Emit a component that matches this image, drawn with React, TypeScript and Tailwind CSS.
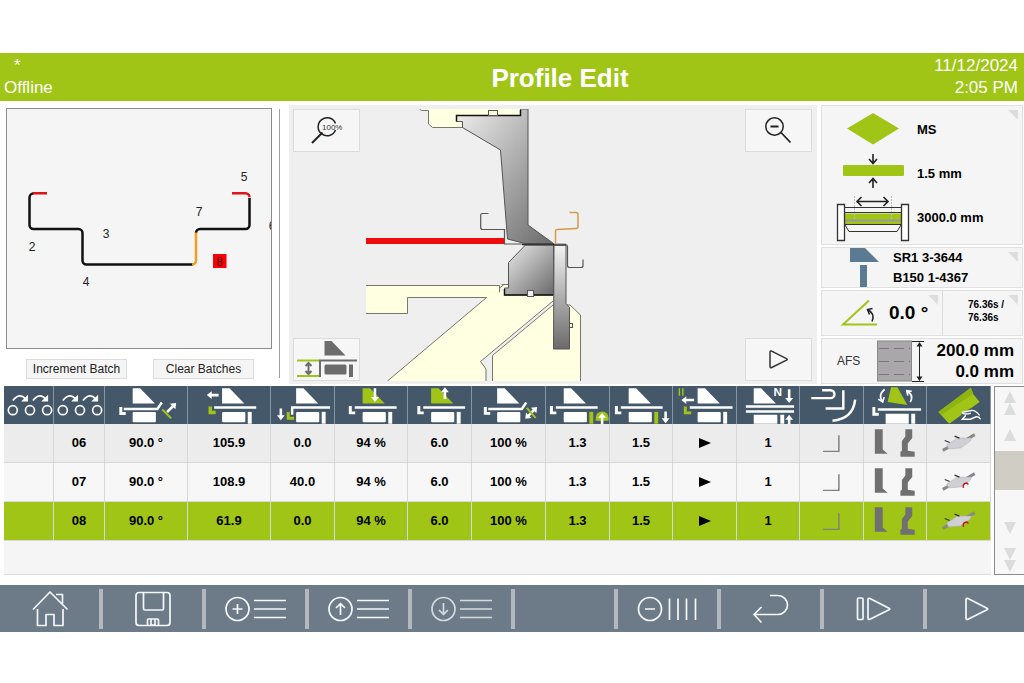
import type { ReactNode } from "react";

const GREEN = "#a0c517";
const WHITE = "#ffffff";

export default function App() {
  return (
    <div className="min-h-screen bg-white pt-[53px] font-['Liberation_Sans',Arial,sans-serif] text-black">
      <Header />
      <main>
        <section className="flex h-[285px]">
          <ProfilePanel />
          <MachineView />
          <InfoPanel />
        </section>
        <StepTable />
      </main>
      <Toolbar />
    </div>
  );
}

function Header() {
  return (
    <header className="grid h-12 grid-cols-[1fr_auto_1fr] bg-[#a0c517] px-1 pt-[2px] text-[17px] leading-[22px] text-white">
      <div>
        <div className="pl-[10px]">*</div>
        <div>Offline</div>
      </div>
      <h1 className="self-center pl-24 text-[26px] font-bold whitespace-nowrap">Profile Edit</h1>
      <div className="pr-[2px] text-right">
        <div>11/12/2024</div>
        <div>2:05 PM</div>
      </div>
    </header>
  );
}

const BEND_LABELS = [
  { n: "2", x: 32, y: 251 },
  { n: "3", x: 106, y: 238 },
  { n: "4", x: 86, y: 286 },
  { n: "5", x: 244, y: 181 },
  { n: "6", x: 272, y: 230 },
  { n: "7", x: 199, y: 216 },
];

function ProfilePanel() {
  return (
    <div className="flex w-[289px] shrink-0 gap-[7px] pl-[6px] pt-[7px]">
      <div className="w-[266px]">
        <div className="border border-[#8c8c8c] bg-[#f5f5f5]">
          <svg viewBox="7 109 264 239" className="block h-[239px] w-[264px]">
            <g fill="none" strokeWidth="2.5">
              <path
                stroke="#111"
                d="M34 193.3a4.5 4.5 0 0 0-4.5 4.5V225a4 4 0 0 0 4 4h45a4 4 0 0 1 4 4v27.5a4 4 0 0 0 4 4H193M196 233a4 4 0 0 1 4-4h45.5a4 4 0 0 0 4-4v-27"
              />
              <path stroke="#e0121a" d="M33 193.3h14M232 193.3h13.5a4 4 0 0 1 4 4" />
              <path stroke="#f0a020" d="M196 232.5v28a4 4 0 0 1-4 4" />
            </g>
            <rect x="213" y="254" width="13.5" height="14" fill="#fb0007" />
            <g fontSize="12" textAnchor="middle" fill="#222">
              {BEND_LABELS.map((l) => (
                <text key={l.n} x={l.x} y={l.y}>
                  {l.n}
                </text>
              ))}
              <text x="219.5" y="265.5" fill="#4a0505">
                8
              </text>
            </g>
          </svg>
        </div>
        <div className="mt-[10px] flex gap-[26px] pl-5 text-[12px] text-[#222]">
          <button className="h-5 w-[101px] border border-[#dcdcdc] bg-[#f5f5f5] whitespace-nowrap">Increment Batch</button>
          <button className="h-5 w-[101px] border border-[#dcdcdc] bg-[#f5f5f5] whitespace-nowrap">Clear Batches</button>
        </div>
      </div>
      <div className="mt-px h-[269px] w-px bg-[#a0a0a0]" />
    </div>
  );
}

function ViewButton({ label, children }: { label: string; children: ReactNode }) {
  return (
    <button
      aria-label={label}
      className="flex h-[43px] w-[67px] items-center justify-center border border-[#dcdcdc] bg-[#f6f6f6]"
    >
      <svg viewBox="0 0 65 41" className="h-[41px] w-[65px]">
        {children}
      </svg>
    </button>
  );
}

function MachineView() {
  return (
    <div className="mt-1 flex h-[279px] min-w-0 flex-1 bg-[#efefef] pb-[3px] pl-1 pr-[5px] pt-1">
      <div className="flex shrink-0 flex-col justify-between">
        <ViewButton label="Zoom 100%">
          <g fill="none" stroke="#222" strokeWidth="1.5">
            <path d="M41.5 13.5A9 9 0 1 0 41.5 20" />
            <path strokeWidth="2" d="M28.5 22.5 18 33" />
          </g>
          <text x="28" y="19.5" fontSize="8" fill="#333">
            100%
          </text>
        </ViewButton>
        <ViewButton label="Tool height">
          <path fill="#6c6c6c" d="M30.5 2h7l14 14.500h-21z" />
          <g fill="none" stroke="#6c6c6c" strokeWidth="2">
            <path d="M63 21.5H26V38" />
            <path strokeWidth="2" d="M14.5 24v11M11.5 27l3-3 3 3M11.5 32l3 3 3-3" />
          </g>
          <rect x="30.5" y="25.5" width="22" height="10" rx="1.5" fill="#6c6c6c" />
          <rect x="55" y="25.5" width="4" height="12.5" fill="#6c6c6c" />
          <path stroke={GREEN} strokeWidth="2" d="M3 21.5h22M3 37h22" />
        </ViewButton>
      </div>

      <svg viewBox="360 109 385 272" preserveAspectRatio="xMinYMin slice" className="h-[272px] min-w-0 flex-1">
        <defs>
          <linearGradient id="steel" x1="0" y1="0" x2="1" y2="1">
            <stop offset="0" stopColor="#efefef" />
            <stop offset="1" stopColor="#6a6a6a" />
          </linearGradient>
          <linearGradient id="bar" x1="0" y1="0" x2="0" y2="1">
            <stop offset="0" stopColor="#f2f2f2" />
            <stop offset="1" stopColor="#6a6a6a" />
          </linearGradient>
        </defs>
        <g stroke="#77776c" strokeWidth="1" fill="#ffffe1">
          {/* upper beam */}
          <path stroke="none" d="M419.5 109H520.5V116H462.5V127.5H432L428.5 124V110Z" />
          <path fill="none" d="M419.5 109l2 1.5h7V124l4 3.5h30.5" />
          {/* table and lower frame */}
          <path d="M366 285.5H499.5V297.5H407.5V313.5H366" />
          <path stroke="none" d="M486.5 297.5 387.5 381H486V369L480.5 361.5 553 301V290H505Z" />
          <path fill="none" d="M486.5 297.5 387.5 381M486 381V369L480.5 361.5 553 301" />
          <path d="M492.5 382V355.5L553 305H570L580.5 315V382" />
          <path d="M501.5 284.5h7v4h-4v6M499.5 288l4-3" />
        </g>
        <g stroke="#555" strokeWidth="1">
          <path
            fill="url(#steel)"
            d="M456.5 115.5H520.5V109H528V225L553.5 243.5H525L507.5 239L500.5 150L462.5 127.5V121.5H456.5Z"
          />
          <path fill="none" stroke="#111" strokeWidth="1.5" d="M456.5 121.5V115.5H520.5V110" />
          <rect x="488.5" y="110.5" width="9" height="5" fill="#ffffe1" />
          <path fill="url(#steel)" d="M525.5 245 508.5 262.5V288H504.5V295H553.5V245Z" />
          <path fill="none" stroke="#111" strokeWidth="1.5" d="M504.5 289v6h49M522 244.5h44" />
          <rect x="527.5" y="290.5" width="6" height="6" fill="#efefef" />
          <path fill="url(#bar)" d="M554 245.5H566V303.5L569.5 307.5V349H553.5Z" />
          <rect x="569.5" y="323.5" width="3" height="4" fill="#efefef" />
        </g>
        <rect x="366" y="238" width="138.5" height="6" fill="#ee0c0c" />
        <g fill="none" stroke="#555" strokeWidth="1.2">
          <path d="M488.5 213.5h-6q-1.8 0-1.8 1.8V227.5q0 2 2 2H504.5V244H553" />
          <path d="M554 244.5H565q2.5 0 2.5 2.5V265.5q0 2 2 2H581q2 0 2-2V259.5" />
        </g>
        <path
          fill="none"
          stroke="#d69a4a"
          strokeWidth="1.5"
          d="M569.5 212.5H576q2 0 2 2V226.5q0 2-2 2L557 229.5q-1.5 0-1.5 2V244"
        />
      </svg>

      <div className="flex shrink-0 flex-col justify-between">
        <ViewButton label="Zoom out">
          <g fill="none" stroke="#222" strokeWidth="1.5">
            <circle cx="28.500" cy="16.500" r="8.700" />
            <path strokeWidth="1.8" d="M24.5 16.5h8M35 22.500 44.500 32.500" />
          </g>
        </ViewButton>
        <ViewButton label="Play">
          <path
            fill="none"
            stroke="#333"
            strokeWidth="1.5"
            strokeLinejoin="round"
            d="M24 13.500v14q0 1.800 1.700 1L40.500 21.200q1.500-.8 0-1.500L25.700 12.200q-1.700-.7-1.700 1.300z"
          />
        </ViewButton>
      </div>
    </div>
  );
}

function Corner() {
  return <span className="absolute right-1 top-1 size-[10px] bg-[#dddddd] [clip-path:polygon(0_0,100%_0,100%_100%)]" />;
}

function InfoPanel() {
  return (
    <aside className="ml-1 mr-px mt-1 flex w-[202px] shrink-0 flex-col font-bold">
      <button className="relative grid h-[140px] grid-cols-[95px_1fr] border border-[#e0e0e0] bg-[#f5f5f5] text-left text-[13px]">
        <svg viewBox="0 0 95 138" className="h-[138px] w-[95px]">
          <path fill={GREEN} d="M51 7 77 22.5 51 38.5 25 22.5z" />
          <rect x="21" y="59" width="61" height="11" rx="1" fill={GREEN} />
          <g fill="none" stroke="#222" strokeWidth="1.6">
            <path d="M51 48v9M47 53l4 4.5 4-4.5M51 82v-9M47 77l4-4.5 4 4.5" />
            <path d="M35 95.5h31M39.5 91 35 95.5l4.5 4.5M61.5 91l4.5 4.5-4.5 4.5" />
          </g>
          <rect x="22" y="107.5" width="58" height="11" fill={GREEN} />
          <path stroke="#bbb" strokeDasharray="2 1" d="M32.5 90v24M69.5 90v24" />
          <g fill="none" stroke="#333">
            <path d="M22 101.5h58M22 106.5h58M22 118.5h58M23 119l4 6.5h48l4-6.5" />
            <path stroke="#999" strokeWidth="2" d="M22 114.5h58" />
            <path fill="#fff" strokeWidth="1.3" d="M15.5 98.5h7v36h-7zM79.5 98.5h7v36h-7z" />
          </g>
        </svg>
        <span className="flex flex-col gap-[22px] pt-[13px] leading-[22px]">
          <span>MS</span>
          <span>1.5 mm</span>
          <span>3000.0 mm</span>
        </span>
        <Corner />
      </button>

      <button className="relative mt-[2px] grid h-[41px] grid-cols-[71px_1fr] border border-[#e0e0e0] bg-[#f5f5f5] text-left text-[13px] leading-5">
        <svg viewBox="0 0 71 39" className="h-[39px] w-[71px]">
          <path fill="#5b7b93" d="M28 0h15l14 14H28zM38 17h7v22h-7z" />
        </svg>
        <span>
          <span className="block">SR1 3-3644</span>
          <span className="block">B150 1-4367</span>
        </span>
        <Corner />
      </button>

      <div className="mt-[2px] grid h-[46px] grid-cols-[121px_1fr] border border-[#e0e0e0] bg-[#f5f5f5]">
        <button className="relative flex items-center border-r border-[#dcdcdc]">
          <svg viewBox="0 0 67 44" className="h-11 w-[67px]">
            <path fill="none" stroke={GREEN} strokeWidth="2" d="M47 9.5 21 33.5h34" />
            <path fill="none" stroke="#222" strokeWidth="1.5" d="M45.5 18.5q8 4 4.5 12M50.5 17.5l-5 1 2 5" />
          </svg>
          <span className="text-[19px] whitespace-nowrap">0.0 °</span>
          <Corner />
        </button>
        <button className="relative pb-1 pl-[25px] text-left text-[10px] leading-[13px]">
          <span className="block">76.36s /</span>
          <span className="block">76.36s</span>
          <Corner />
        </button>
      </div>

      <div className="mt-[2px] flex h-[46px] items-center border border-[#e0e0e0] bg-[#f5f5f5]">
        <span className="w-[55px] pl-[15px] text-[12px] font-normal text-[#333]">AFS</span>
        <svg viewBox="0 0 48 44" className="h-11 w-12">
          <rect x=".5" y="2" width="34" height="40" fill="#aaa7aa" stroke="#888" />
          <path stroke="#777" strokeDasharray="10 5" d="M2 9.5h31M2 22.5h31M2 35.5h31" />
          <path stroke="#222" d="M35 2.5h12M35 42.5h12M42.5 4v37" />
          <path fill="#222" d="M42.5 3l3 4.5h-6zM42.5 42l3-4.5h-6z" />
        </svg>
        <span className="flex-1 pr-2 text-right text-[17px] leading-[21px] whitespace-nowrap">
          <span className="block">200.0 mm</span>
          <span className="block">0.0 mm</span>
        </span>
      </div>
    </aside>
  );
}

/* Header icon parts, drawn with the punch's left edge at x = 0 */

function Punch({ fill = WHITE }: { fill?: string }) {
  return <path fill={fill} d="M0 2h7.5L22.5 17.5H0z" />;
}

function Die() {
  return <rect x="0" y="26" width="23.5" height="10.5" rx="1" fill={WHITE} />;
}

function Gauge({ fill = WHITE }: { fill?: string }) {
  return <path fill={fill} d="M26 26h4v12h-4z" />;
}

function Sheet({ bent = false }: { bent?: boolean }) {
  return (
    <g fill="none" stroke={WHITE}>
      <path strokeWidth="2.5" d={bent ? "M-9 23H25L29.5 16.5" : "M-8 21.5H34.5"} />
      <path strokeWidth="3" d={bent ? "M-12 21v6.5h5" : "M-12.5 20v7h5"} />
    </g>
  );
}

function Arrow({ x, y, rotate = 0, size = 12 }: { x: number; y: number; rotate?: number; size?: number }) {
  return (
    <g transform={`translate(${x} ${y}) rotate(${rotate})`}>
      <path fill={WHITE} d={`M0 0l-4 5h2.7v${size - 5}h2.6V5H4z`} />
    </g>
  );
}

function Rollers() {
  return (
    <>
      <g fill="none" stroke={WHITE} strokeWidth="1.7">
        <circle cx="9" cy="24.3" r="4.6" />
        <circle cx="26.5" cy="24.3" r="4.6" />
        <circle cx="44" cy="24.3" r="4.6" />
        <path d="M9 14.5q7-9 13.5-1M29.5 14.5q7-9 13.5-1" />
      </g>
      <path fill={WHITE} d="M24.5 8.5v7h-7zM45 8.5v7h-7z" />
    </>
  );
}

type Column = { label: string; width: string; w: number; icon: ReactNode };

const COLUMNS: Column[] = [
  { label: "Group", width: "w-[50px]", w: 50, icon: <Rollers /> },
  { label: "Step", width: "w-[51px]", w: 51, icon: <Rollers /> },
  {
    label: "Angle",
    width: "w-[83px]",
    w: 83,
    icon: (
      <g transform="translate(28 0)">
        <Punch />
        <Sheet bent />
        <Die />
        <path stroke={GREEN} strokeWidth="2" d="M30 23.5l9 9" />
        <Arrow x={44} y={17} rotate={45} size={13} />
      </g>
    ),
  },
  {
    label: "Backgauge X",
    width: "w-[83px]",
    w: 83,
    icon: (
      <g transform="translate(34.5 0)">
        <Punch />
        <path stroke={WHITE} strokeWidth="2.5" d="M-8 21.5H34.5" />
        <path fill="none" stroke={GREEN} strokeWidth="3.5" d="M-12 20.5v6h5.5" />
        <Die />
        <Gauge />
        <Arrow x={-15.5} y={9} rotate={-90} />
      </g>
    ),
  },
  {
    label: "Backgauge R",
    width: "w-[64px]",
    w: 64,
    icon: (
      <g transform="translate(25.5 0)">
        <Punch />
        <path fill="none" stroke={WHITE} strokeWidth="2.5" d="M-4 29V21.5H34.5" />
        <path fill="none" stroke={GREEN} strokeWidth="3" d="M-8 26v6.5h6" />
        <Die />
        <Gauge />
        <Arrow x={-15.5} y={34.5} rotate={180} />
      </g>
    ),
  },
  {
    label: "Clamp force",
    width: "w-[73px]",
    w: 73,
    icon: (
      <g transform="translate(28 0)">
        <Punch fill={GREEN} />
        <Sheet />
        <Die />
        <Gauge />
        <Arrow x={12.5} y={16} rotate={180} size={14} />
      </g>
    ),
  },
  {
    label: "Opening",
    width: "w-[64px]",
    w: 64,
    icon: (
      <g transform="translate(23.5 0)">
        <Punch fill={GREEN} />
        <Sheet />
        <Die />
        <Gauge />
        <Arrow x={14} y={1} />
      </g>
    ),
  },
  {
    label: "Bending speed",
    width: "w-[74px]",
    w: 74,
    icon: (
      <g transform="translate(25.5 0)">
        <Punch />
        <Sheet bent />
        <Die />
        <Arrow x={40.5} y={21} rotate={45} size={9} />
        <Arrow x={28.5} y={33} rotate={225} size={9} />
        <path stroke={GREEN} strokeWidth="2" d="M30 22l9 10" />
      </g>
    ),
  },
  {
    label: "Lower beam up",
    width: "w-[64px]",
    w: 64,
    icon: (
      <g transform="translate(18 0)">
        <Punch />
        <Sheet />
        <Die />
        <Gauge fill={GREEN} />
        <path fill={GREEN} d="M32.5 35v-3a6.5 6.5 0 0 1 13 0v3z" />
        <Arrow x={39} y={27} />
      </g>
    ),
  },
  {
    label: "Lower beam down",
    width: "w-[63px]",
    w: 63,
    icon: (
      <g transform="translate(19 0)">
        <Punch />
        <Sheet />
        <Die />
        <Gauge fill={GREEN} />
        <Arrow x={37.5} y={37.5} rotate={180} />
      </g>
    ),
  },
  {
    label: "Retract",
    width: "w-[64px]",
    w: 64,
    icon: (
      <g transform="translate(25 0)">
        <Punch />
        <path stroke={WHITE} strokeWidth="2.5" d="M-8 21.5H35.5" />
        <path fill="none" stroke={GREEN} strokeWidth="3" d="M-12.5 20.5v6.5h6" />
        <Die />
        <Gauge />
        <Arrow x={-16.5} y={14} rotate={-90} size={13} />
        <path stroke={GREEN} strokeWidth="1.5" d="M-18.5 2v7.5M-15 2v7.5" />
      </g>
    ),
  },
  {
    label: "Repeats",
    width: "w-[63px]",
    w: 63,
    icon: (
      <>
        <g transform="translate(17 0)">
          <Punch />
        </g>
        <path stroke={WHITE} strokeWidth="2.5" d="M9 20.5h49M9 25.5h49" />
        <path fill={WHITE} d="M17 29h24v9H17zM44 29h4v9h-4z" />
        <Arrow x={53} y={17} rotate={180} size={14} />
        <Arrow x={53} y={29} />
        <text x="37" y="10" fontSize="12" fontWeight="bold" fill={WHITE}>
          N
        </text>
      </>
    ),
  },
  {
    label: "Bend type",
    width: "w-[64px]",
    w: 64,
    icon: (
      <path
        fill="none"
        stroke={WHITE}
        strokeWidth="2.5"
        d="M22.5 4H31a4 4 0 0 1 0 8H11.5M44 4v18.5H26M56 13.5Q54 33 33 35"
      />
    ),
  },
  {
    label: "Tools",
    width: "w-[63px]",
    w: 63,
    icon: (
      <>
        <path fill={GREEN} d="M27.5 1H34L44 19 24 16z" />
        <path
          fill="none"
          stroke={WHITE}
          strokeWidth="1.7"
          d="M21 3q-7 6-2.500 12M14.500 13l4.500 3 1.500-5M47 16q4-7-3-11M48.500 5l-5-.5 1 5"
        />
        <path stroke={WHITE} strokeWidth="2.5" d="M14 23.5h44" />
        <path fill="none" stroke={WHITE} strokeWidth="3" d="M10 21v7.5h5" />
        <path fill={WHITE} d="M22 28h23.5v10H22zM48 28h4v10h-4z" />
      </>
    ),
  },
  {
    label: "Handling",
    width: "w-[64px]",
    w: 64,
    icon: (
      <>
        <path fill={GREEN} d="M11.5 26 44.5 1.5 47 8 53.5 16 22.5 38z" />
        <path fill="#8fb312" d="M11.5 26 44.5 1.5 47 7.5 14.500 29z" />
        <path fill="#44586a" d="M35 28l9-5.500 10 2v9l-8 3.500H34z" />
        <path
          fill="none"
          stroke={WHITE}
          strokeWidth="1.5"
          strokeLinecap="round"
          d="M53 29q-4-5-8-4.5l-9 2q0 2.5 8 1M39 30l-3 3.5h8l6-2.5q3-.5 4 2"
        />
      </>
    ),
  },
];

type Step = {
  id: string;
  values: string[];
  twist: boolean;
};

const STEPS: Step[] = [
  { id: "06", values: ["90.0 °", "105.9", "0.0", "94 %", "6.0", "100 %", "1.3", "1.5"], twist: false },
  { id: "07", values: ["90.0 °", "108.9", "40.0", "94 %", "6.0", "100 %", "1.3", "1.5"], twist: true },
  { id: "08", values: ["90.0 °", "61.9", "0.0", "94 %", "6.0", "100 %", "1.3", "1.5"], twist: true },
];

const ROW_BG = ["bg-[#ececec]", "bg-[#f7f7f7]", "bg-[#a0c517]"];

function StepTable() {
  return (
    <section className="flex h-[189px] gap-[3px] pl-1">
      <div className="min-w-0 flex-1 border-b border-[#dcdcdc] bg-[#f5f5f5]">
        <table className="w-full table-fixed border-separate border-spacing-0 text-center text-[13px] font-bold">
          <thead>
            <tr className="bg-[#44586a]">
              {COLUMNS.map((c) => (
                <th key={c.label} aria-label={c.label} className={`h-[38px] border-r border-[#8796a3] p-0 ${c.width}`}>
                  <svg viewBox={`0 0 ${c.w} 38`} className="mx-auto block h-[38px] w-full">
                    {c.icon}
                  </svg>
                </th>
              ))}
            </tr>
          </thead>
          <tbody>
            {STEPS.map((s, i) => (
              <tr
                key={s.id}
                className={`${ROW_BG[i]} [&>td]:h-[39px] [&>td]:border-b [&>td]:border-r [&>td]:border-[#d8d8d8] [&>td]:p-0`}
              >
                <td />
                <td>{s.id}</td>
                {s.values.map((v, k) => (
                  <td key={k}>{v}</td>
                ))}
                <td>
                  <svg viewBox="0 0 12 10" className="mx-auto h-[10px] w-3">
                    <path d="M0 0l12 5-12 5z" />
                  </svg>
                </td>
                <td>1</td>
                <td>
                  <svg viewBox="0 0 64 38" className="mx-auto block h-[38px] w-full">
                    <path fill="none" stroke="#808080" strokeWidth="1.5" d="M39.5 11v16.5h-16" />
                  </svg>
                </td>
                <td>
                  <svg viewBox="0 0 63 38" className="mx-auto block h-[38px] w-full" fill="#707070">
                    <path d="M11 5h8v20.5l5 4.5H11z" />
                    <path d="M42 5h7v9l-4.5 5.5V27l7 1v5H37v-5l1.5-1V17l3.5-4.5z" />
                  </svg>
                </td>
                <td>
                  <HandlingIcon twist={s.twist} />
                </td>
              </tr>
            ))}
          </tbody>
        </table>
      </div>
      <Scroller />
    </section>
  );
}

function HandlingIcon({ twist }: { twist: boolean }) {
  return (
    <svg viewBox="0 0 64 38" className="mx-auto block h-[38px] w-full">
      <path stroke="#888" strokeWidth="3" d="M16 26.5l9-5M40 15.5l8.5-5" />
      <path fill="#cfcfd6" stroke="#aaa" strokeWidth=".5" d="M20 21l11-7 14 0-1 3-10 7-12 1z" />
      <path stroke="#333" strokeWidth="1.2" d="M18 16.5l5 2M28 12l5 2" />
      {twist && <path fill="none" stroke="#c01818" strokeWidth="1.5" d="M37 25q-1-5 3.5-5l1.5 1.5" />}
    </svg>
  );
}

function Triangle({ down = false }: { down?: boolean }) {
  return (
    <svg viewBox="0 0 12 12" className="h-3 w-3" fill="#dadddb">
      <path d={down ? "M0 0h12L6 12z" : "M6 0l6 12H0z"} />
    </svg>
  );
}

function Scroller() {
  return (
    <div className="flex w-[30px] shrink-0 flex-col border border-r-0 border-[#8c8c8c] bg-[#f7f7f7]">
      <button aria-label="First step" className="flex h-7 flex-col items-center pt-1">
        <Triangle />
        <Triangle />
      </button>
      <button aria-label="Previous step" className="mt-3 flex h-6 justify-center pt-[2px]">
        <Triangle />
      </button>
      <div className="h-[39px] bg-[#d0cec4]" />
      <button aria-label="Next step" className="mt-8 flex h-6 justify-center">
        <Triangle down />
      </button>
      <button aria-label="Last step" className="mt-[2px] flex flex-col items-center">
        <Triangle down />
        <Triangle down />
      </button>
    </div>
  );
}

const TOOLS: { label: string; dim?: boolean; icon: ReactNode }[] = [
  {
    label: "Home",
    icon: <path d="M14 22.5 31 5 48.5 22.5M37 7.5h6.500v9M18.500 22v16.500H27v-11h8v11h9V22" />,
  },
  {
    label: "Save",
    icon: (
      <>
        <rect x="14" y="5.5" width="34" height="33" rx="3" />
        <path d="M21.5 6v15.5q0 1.5 1.5 1.5h17q1.5 0 1.5-1.5V6M25.5 38v-5q0-1 1-1h9q1 0 1 1v5M29 32.5V38h4v-5.5" />
      </>
    ),
  },
  {
    label: "Insert step",
    icon: (
      <>
        <circle cx="12.5" cy="22" r="11.5" />
        <path d="M12.5 17v10M7.5 22h10M29 13.5h32M29 22h32M29 30.5h32" />
      </>
    ),
  },
  {
    label: "Move step up",
    icon: (
      <>
        <circle cx="12.5" cy="22" r="11.5" />
        <path d="M12.5 28V16.5M8 21l4.5-4.5L17 21M29 13.5h32M29 22h32M29 30.5h32" />
      </>
    ),
  },
  {
    label: "Move step down",
    dim: true,
    icon: (
      <>
        <circle cx="12.5" cy="22" r="11.5" />
        <path d="M12.5 16v11.5M8 23l4.5 4.5L17 23M29 13.5h32M29 22h32M29 30.5h32" />
      </>
    ),
  },
  { label: "Empty", icon: null },
  {
    label: "Remove",
    icon: (
      <>
        <circle cx="13" cy="22" r="11.5" />
        <path d="M8 22h10M32.5 11.5V33M41 11.5V33M49.5 11.5V33M58.5 11.5V33" />
      </>
    ),
  },
  {
    label: "Back",
    icon: <path d="M30 8.5h8a9.5 9.5 0 0 1 0 19H14M21.5 20 14 27.5l7.5 8" />,
  },
  {
    label: "Single step",
    icon: (
      <>
        <rect x="14.5" y="11" width="5.5" height="21.5" rx="1" />
        <path d="M25 13v18q0 2 2 1.2L46 22.8q1.5-.8 0-1.6L27 11.5Q25 10.7 25 13z" />
      </>
    ),
  },
  {
    label: "Start",
    icon: <path d="M21 13v18q0 2 2 1.2L42 22.8q1.5-.8 0-1.6L23 11.5Q21 10.7 21 13z" />,
  },
];

function Toolbar() {
  return (
    <nav className="mt-[10px] flex h-[47px] bg-[#6c7b87] pb-[3px] pt-1">
      {TOOLS.map((t, i) => (
        <button
          key={t.label}
          aria-label={t.label}
          className={`flex min-w-0 items-center justify-center ${
            i === TOOLS.length - 1 ? "flex-[97]" : "flex-[99] border-r-4 border-[#b4b8bd]"
          }`}
        >
          <svg
            viewBox="0 0 62 44"
            className="h-11 w-[62px] shrink-0"
            fill="none"
            stroke={t.dim ? "#d5dade" : "#f4f8fb"}
            strokeWidth="1.7"
            strokeLinejoin="round"
          >
            {t.icon}
          </svg>
        </button>
      ))}
    </nav>
  );
}
